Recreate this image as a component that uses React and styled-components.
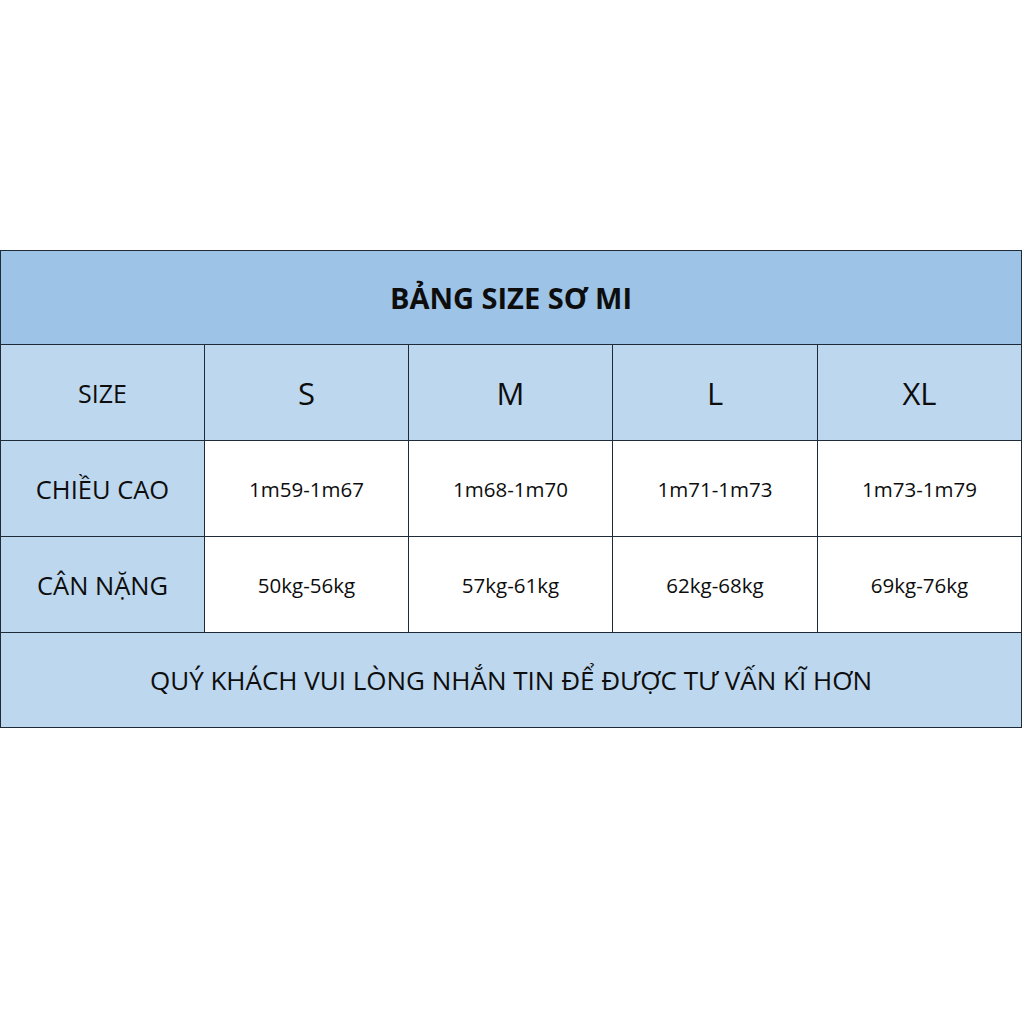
import React from "react";
import styled, { createGlobalStyle } from "styled-components";

const GlobalStyle = createGlobalStyle`
  body {
    margin: 0;
    background: #ffffff;
    font-family: "Open Sans", "Noto Sans", sans-serif;
    color: #0d0d0d;
  }
`;

const Page = styled.div`
  width: 1024px;
  height: 1024px;
  padding-top: 250px;
  box-sizing: border-box;
`;

const Table = styled.table`
  width: 1021px;
  border-collapse: collapse;
  table-layout: fixed;
`;

const Cell = styled.td`
  border: 1px solid #1f2b38;
  padding: 0;
  text-align: center;
  vertical-align: middle;
  height: ${(p) => p.$h || 95}px;
  background: ${(p) =>
    p.$tone === "head" ? "#9dc3e6" : p.$tone === "light" ? "#bdd7ee" : "#ffffff"};
  font-size: ${(p) => p.$size || 19}px;
  font-weight: ${(p) => (p.$bold ? 700 : 400)};
  white-space: nowrap;
`;

const sizes = ["S", "M", "L", "XL"];
const heights = ["1m59-1m67", "1m68-1m70", "1m71-1m73", "1m73-1m79"];
const weights = ["50kg-56kg", "57kg-61kg", "62kg-68kg", "69kg-76kg"];

export default function App() {
  return (
    <Page>
      <GlobalStyle />
      <Table>
        <colgroup>
          <col style={{ width: 204 }} />
          <col style={{ width: 204 }} />
          <col style={{ width: 204 }} />
          <col style={{ width: 205 }} />
          <col style={{ width: 204 }} />
        </colgroup>
        <tbody>
          <tr>
            <Cell colSpan={5} $tone="head" $h={93} $bold $size={29}>
              BẢNG SIZE SƠ MI
            </Cell>
          </tr>
          <tr>
            <Cell $tone="light" $h={95} $size={25}>SIZE</Cell>
            {sizes.map((s) => (
              <Cell key={s} $tone="light" $h={95} $size={31}>
                {s}
              </Cell>
            ))}
          </tr>
          <tr>
            <Cell $tone="light" $h={95} $size={25.5}>CHIỀU CAO</Cell>
            {heights.map((v) => (
              <Cell key={v} $h={95} $size={20.5}>
                {v}
              </Cell>
            ))}
          </tr>
          <tr>
            <Cell $tone="light" $h={95} $size={25.5}>CÂN NẶNG</Cell>
            {weights.map((v) => (
              <Cell key={v} $h={95} $size={20.5}>
                {v}
              </Cell>
            ))}
          </tr>
          <tr>
            <Cell colSpan={5} $tone="light" $h={94} $size={26}>
              QUÝ KHÁCH VUI LÒNG NHẮN TIN ĐỂ ĐƯỢC TƯ VẤN KĨ HƠN
            </Cell>
          </tr>
        </tbody>
      </Table>
    </Page>
  );
}
